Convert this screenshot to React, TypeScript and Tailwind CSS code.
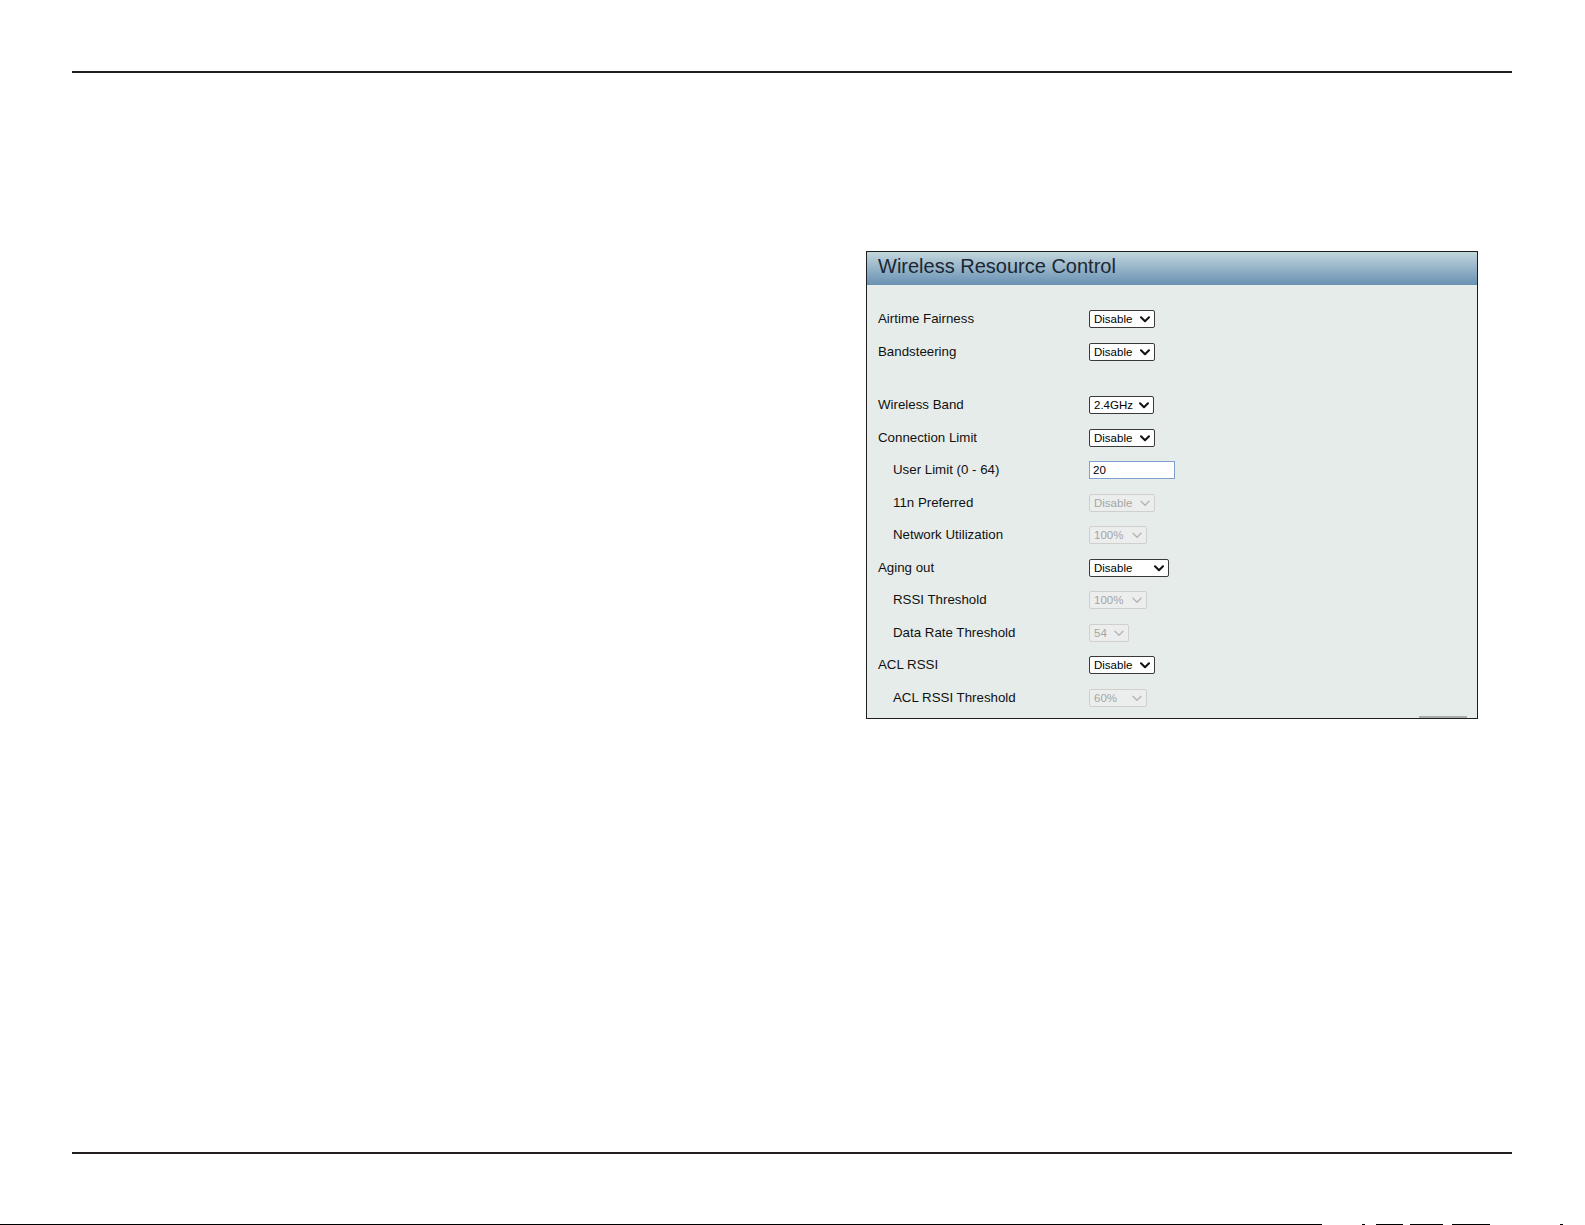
type Row =
  | { kind: "select"; label: string; value: string; width: number; indent?: boolean; disabled?: boolean }
  | { kind: "input"; label: string; value: string; width: number; indent?: boolean }
  | { kind: "gap" };

const rows: Row[] = [
  { kind: "select", label: "Airtime Fairness", value: "Disable", width: 66 },
  { kind: "select", label: "Bandsteering", value: "Disable", width: 66 },
  { kind: "gap" },
  { kind: "select", label: "Wireless Band", value: "2.4GHz", width: 65 },
  { kind: "select", label: "Connection Limit", value: "Disable", width: 66 },
  { kind: "input", label: "User Limit (0 - 64)", value: "20", width: 86, indent: true },
  { kind: "select", label: "11n Preferred", value: "Disable", width: 66, indent: true, disabled: true },
  { kind: "select", label: "Network Utilization", value: "100%", width: 58, indent: true, disabled: true },
  { kind: "select", label: "Aging out", value: "Disable", width: 80 },
  { kind: "select", label: "RSSI Threshold", value: "100%", width: 58, indent: true, disabled: true },
  { kind: "select", label: "Data Rate Threshold", value: "54", width: 40, indent: true, disabled: true },
  { kind: "select", label: "ACL RSSI", value: "Disable", width: 66 },
  { kind: "select", label: "ACL RSSI Threshold", value: "60%", width: 58, indent: true, disabled: true },
];

function Chevron({ disabled }: { disabled?: boolean }) {
  return (
    <svg width="10" height="7" viewBox="0 0 10 7" className="shrink-0">
      <path
        d="M1 1.2 L5 5.2 L9 1.2"
        fill="none"
        stroke={disabled ? "#b4b4b4" : "#111"}
        strokeWidth={disabled ? 1.4 : 2}
        strokeLinecap="round"
        strokeLinejoin="round"
      />
    </svg>
  );
}

function FakeSelect({ value, width, disabled }: { value: string; width: number; disabled?: boolean }) {
  return (
    <div
      style={{ width }}
      className={
        "flex h-[18px] items-center justify-between rounded-[2px] border pl-[4px] pr-[4px] pt-[1px] text-[11.5px] leading-none " +
        (disabled ? "border-[#cfcfcf] bg-[#eceeed] text-[#a5a5a5]" : "border-[#3a3a3a] bg-white text-black")
      }
    >
      <span>{value}</span>
      <Chevron disabled={disabled} />
    </div>
  );
}

function FieldRow({ row }: { row: Row }) {
  if (row.kind === "gap") return <div className="h-[21px]" />;
  return (
    <div className="flex h-[32.5px] items-center">
      <div className={"w-[211px] text-[13.3px] text-[#111] " + (row.indent ? "pl-[15px]" : "")}>{row.label}</div>
      {row.kind === "input" ? (
        <div
          style={{ width: row.width }}
          className="flex h-[18px] items-center border border-[#7f9fd0] bg-white pl-[3px] pt-[1px] text-[11.5px] text-black"
        >
          {row.value}
        </div>
      ) : (
        <FakeSelect value={row.value} width={row.width} disabled={row.disabled} />
      )}
    </div>
  );
}

export default function App() {
  return (
    <div className="relative h-[1225px] w-[1585px] overflow-hidden bg-white font-['Liberation_Sans',Arial,sans-serif]">
      <div className="ml-[72px] mt-[71px] h-[2px] w-[1440px] bg-[#231f20]" />

      <div className="relative ml-[866px] mt-[178px] h-[468px] w-[612px] border border-[#1e1e1e] bg-[#e6ecea]">
        <div className="flex h-[33px] items-center bg-gradient-to-b from-[#c3d6dc] to-[#6991b3] pb-[6px] pl-[11px] text-[20px] text-[#1b2733]">
          Wireless Resource Control
        </div>
        <div className="pl-[11px] pt-[18px]">
          {rows.map((row, i) => (
            <FieldRow key={i} row={row} />
          ))}
        </div>
        <div className="absolute bottom-0 right-[10px] h-[2px] w-[48px] bg-[#a8abab]" />
      </div>

      <div className="ml-[72px] mt-[433px] h-[2px] w-[1440px] bg-[#231f20]" />

      <div className="mt-[70px] flex h-[1px] items-start">
        <div className="h-[1px] w-[1322px] bg-black" />
        <div className="ml-[40px] h-[1px] w-[3px] bg-black" />
        <div className="ml-[11px] h-[1px] w-[27px] bg-black" />
        <div className="ml-[7px] h-[1px] w-[33px] bg-black" />
        <div className="ml-[9px] h-[1px] w-[38px] bg-black" />
        <div className="ml-[70px] h-[1px] w-[3px] bg-black" />
      </div>
    </div>
  );
}
